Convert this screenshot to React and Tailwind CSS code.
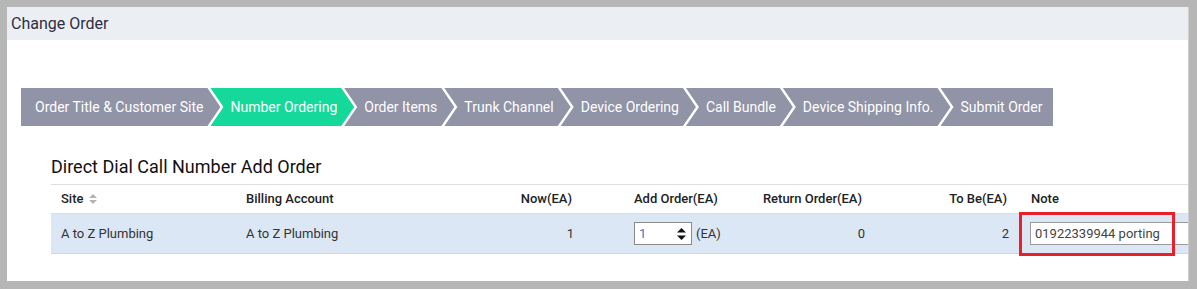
import React from 'react';

const steps = [
  'Order Title & Customer Site',
  'Number Ordering',
  'Order Items',
  'Trunk Channel',
  'Device Ordering',
  'Call Bundle',
  'Device Shipping Info.',
  'Submit Order',
];

function Step({ label, index, active }) {
  const first = index === 0;
  const last = index === steps.length - 1;
  let shape = '[clip-path:polygon(0_0,calc(100%_-_13px)_0,100%_50%,calc(100%_-_13px)_100%,0_100%,13px_50%)]';
  if (first) shape = '[clip-path:polygon(0_0,calc(100%_-_13px)_0,100%_50%,calc(100%_-_13px)_100%,0_100%)]';
  if (last) shape = '[clip-path:polygon(0_0,100%_0,100%_100%,0_100%,13px_50%)]';
  return (
    <div
      className={`h-[38px] flex items-center whitespace-nowrap text-white text-[14px] ${shape} ${
        active ? 'bg-[#14d99a]' : 'bg-[#9193a6]'
      } ${first ? 'pl-[14px]' : 'pl-[20px] -ml-[10px]'} ${last ? 'pr-[11px]' : 'pr-[17px]'}`}
    >
      {label}
    </div>
  );
}

function SortIcon() {
  return (
    <svg width="8" height="10" viewBox="0 0 8 10" className="ml-[6px]">
      <path d="M4 0 L8 4 L0 4 Z" fill="#b3b3b3" />
      <path d="M0 6 L8 6 L4 10 Z" fill="#b3b3b3" />
    </svg>
  );
}

function NumberBox({ value }) {
  return (
    <div className="w-[58px] h-[23px] border border-[#8a8a8a] bg-white flex items-center justify-between pl-[4px] pr-[5px]">
      <span className="text-[#3b76c4] text-[13px]">{value}</span>
      <svg width="9" height="12" viewBox="0 0 9 12">
        <path d="M4.5 0 L9 4.5 L0 4.5 Z" fill="#111" />
        <path d="M0 7.5 L9 7.5 L4.5 12 Z" fill="#111" />
      </svg>
    </div>
  );
}

export default function App() {
  return (
    <div
      className="w-[1197px] h-[289px] bg-[#b5b6b5] pt-[7px] pl-[7px] overflow-hidden"
      style={{ fontFamily: 'Roboto, "Noto Sans", sans-serif' }}
    >
      <div className="relative w-[1182px] h-[274px] bg-white overflow-hidden border-r border-[#cfcfcf]">
        {/* Header */}
        <div className="h-[33px] bg-[#ebeef2] flex items-center pl-[4px] text-[16px] text-[#2b2e45]">
          Change Order
        </div>

        {/* Steps */}
        <div className="flex mt-[48px] ml-[14px]">
          {steps.map((s, i) => (
            <Step key={s} label={s} index={i} active={i === 1} />
          ))}
        </div>

        {/* Section */}
        <div className="ml-[44px] mt-[29px]">
          <h2 className="text-[18px] leading-[24px] text-[#111] mb-[5px]">Direct Dial Call Number Add Order</h2>
          <table className="table-fixed border-collapse w-[1190px] text-[13px]">
            <colgroup>
              <col className="w-[185px]" />
              <col className="w-[184px]" />
              <col className="w-[204px]" />
              <col className="w-[129px]" />
              <col className="w-[122px]" />
              <col className="w-[146px]" />
              <col className="w-[220px]" />
            </colgroup>
            <thead>
              <tr className="h-[29px] border-t border-[#c6c6c6] border-b border-[#dedede] text-[#222] font-medium">
                <th className="text-left font-medium pl-[10px]">
                  <div className="flex items-center">
                    Site
                    <SortIcon />
                  </div>
                </th>
                <th className="text-left font-medium pl-[10px]">Billing Account</th>
                <th className="text-right font-medium pr-[52px]">Now(EA)</th>
                <th className="text-left font-medium pl-[10px]">Add Order(EA)</th>
                <th className="text-right font-medium pr-[13px]">Return Order(EA)</th>
                <th className="text-right font-medium pr-[14px]">To Be(EA)</th>
                <th className="text-left font-medium pl-[10px]">Note</th>
              </tr>
            </thead>
            <tbody>
              <tr className="h-[40px] bg-[#dce7f5] border-b border-[#d6d6d6] text-[#333]">
                <td className="pl-[10px]">A to Z Plumbing</td>
                <td className="pl-[10px]">A to Z Plumbing</td>
                <td className="text-right pr-[50px]">1</td>
                <td className="pl-[10px]">
                  <div className="flex items-center">
                    <NumberBox value="1" />
                    <span className="ml-[4px]">(EA)</span>
                  </div>
                </td>
                <td className="text-right pr-[10px]">0</td>
                <td className="text-right pr-[12px]">2</td>
                <td className="pl-[9px]">
                  <div className="w-[200px] h-[23px] border border-[#9a9a9a] bg-white flex items-center pl-[4px] text-[#444]">
                    01922339944 porting
                  </div>
                </td>
              </tr>
            </tbody>
          </table>
        </div>

        {/* Annotation */}
        <div className="absolute left-[1012px] top-[205px] w-[156px] h-[44px] border-[3px] border-[#e8202a]" />
      </div>
    </div>
  );
}
